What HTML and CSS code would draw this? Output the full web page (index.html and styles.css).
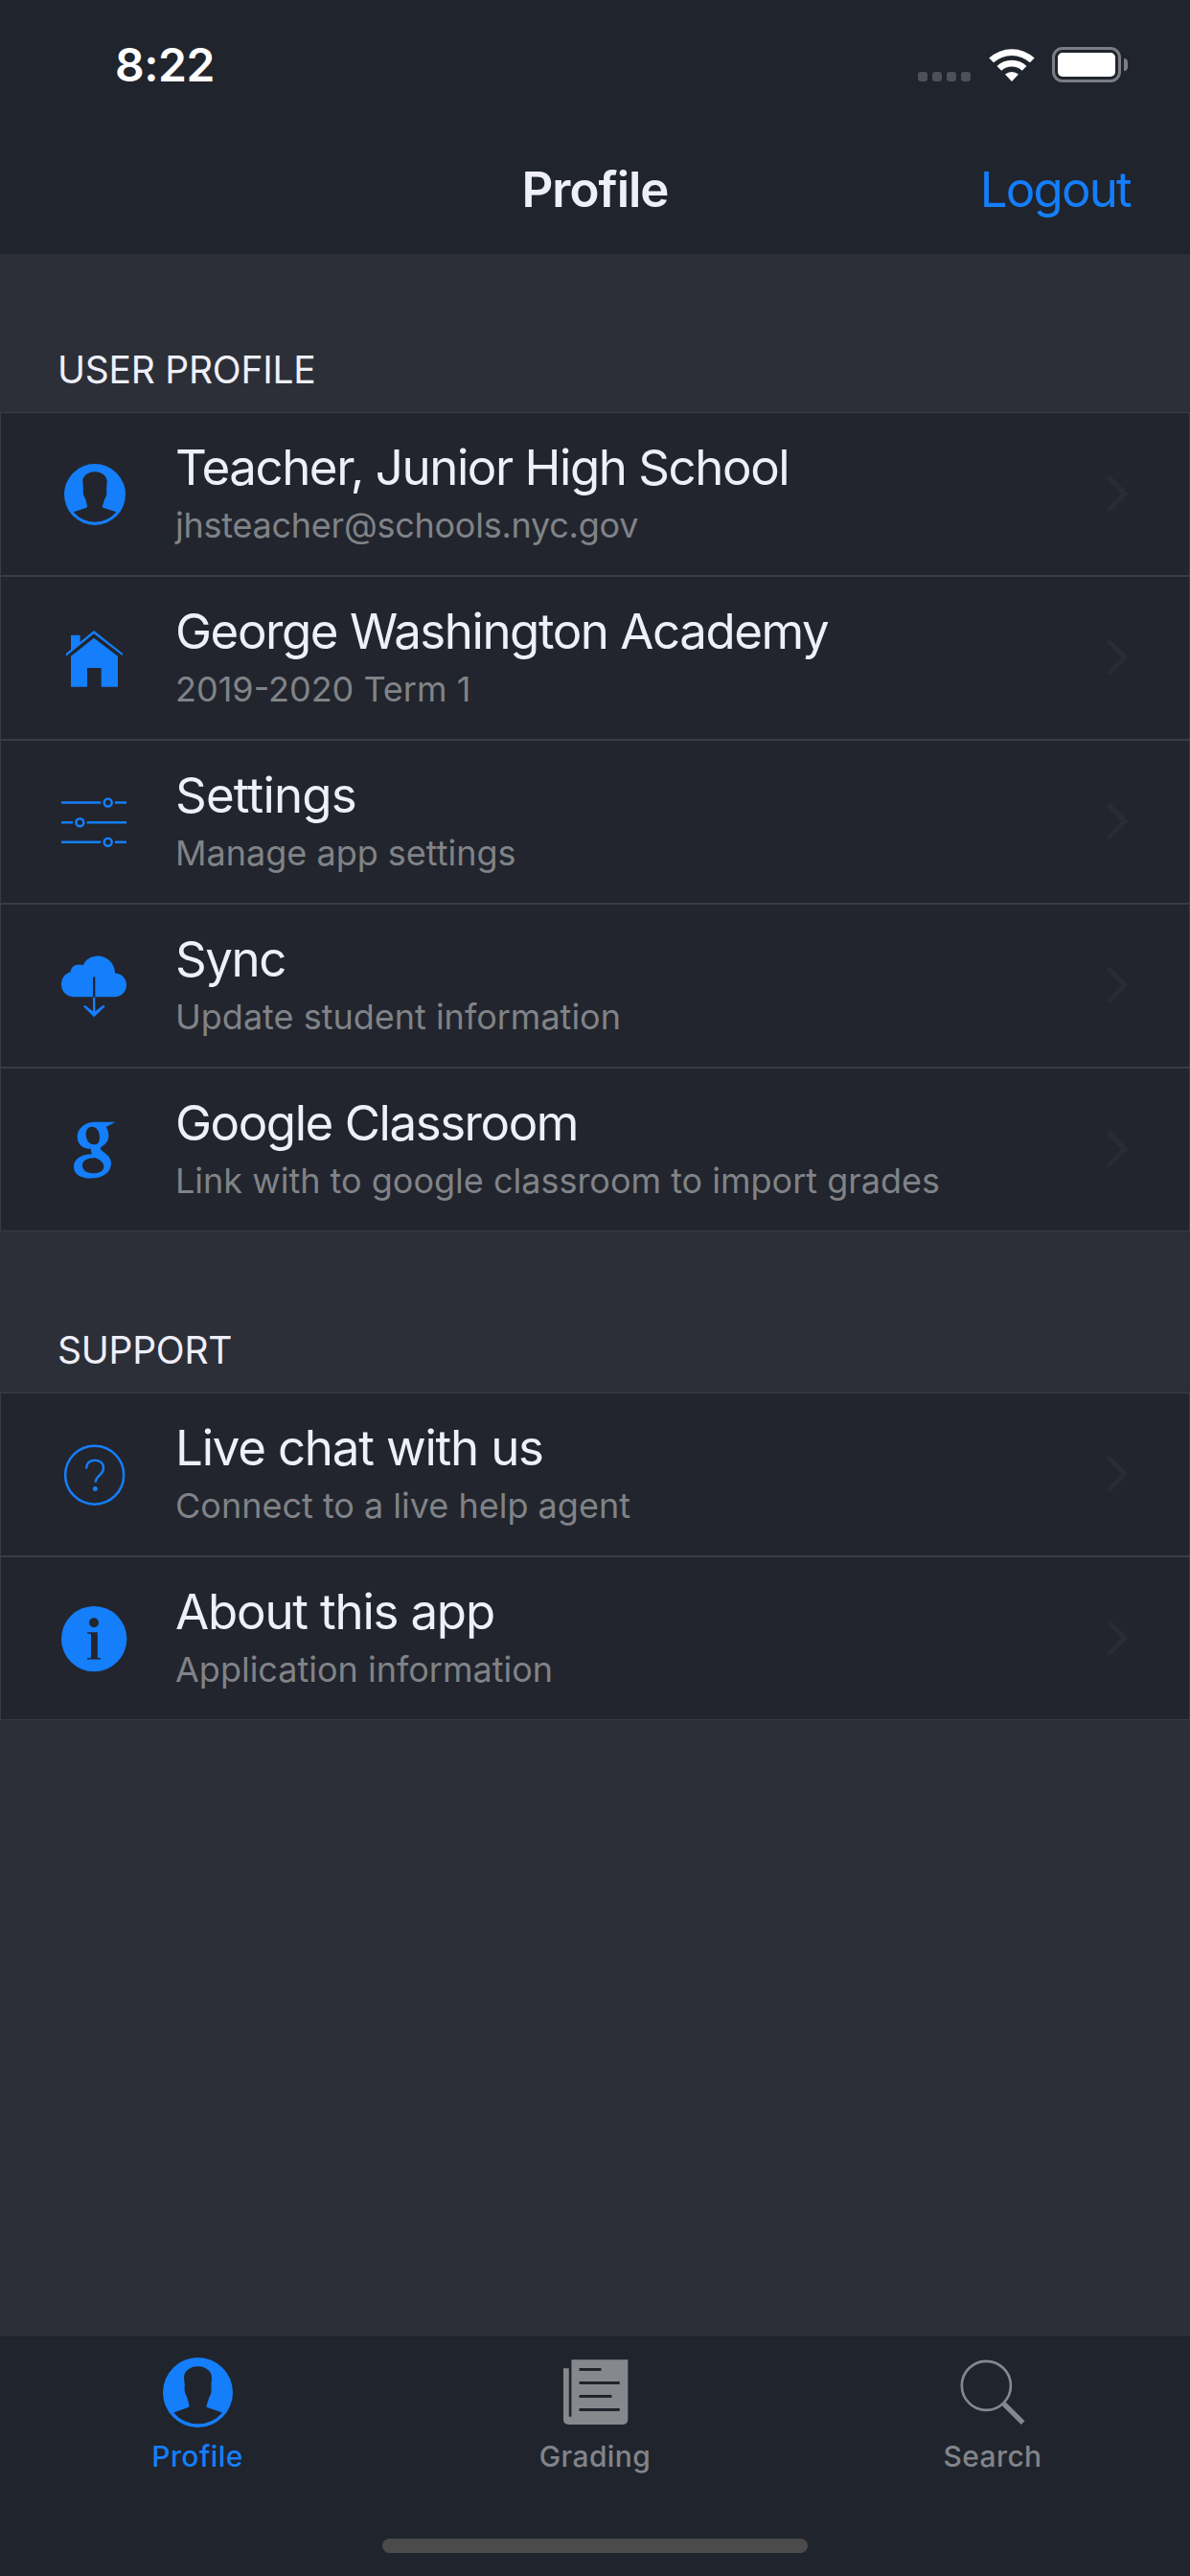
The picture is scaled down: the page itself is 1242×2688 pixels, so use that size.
FILE: index.html
```html
<!DOCTYPE html>
<html lang="en">
  <head>
    <meta charset="utf-8">
    <meta name="viewport" content="width=device-width">
    <title>Profile</title>
    <link rel="stylesheet" href="styles.css">
  </head>
  <body>
    <!-- shared icons -->
    <svg class="icon-defs">
      <symbol id="icon-person" viewBox="0 0 220 220">
        <path fill-rule="evenodd" d="M110 0A110 110 0 0 1 110 220A110 110 0 0 1 110 0ZM33.500 173A100 100 0 0 0 187 173L139 157Q136 156 137 153Q144 129 146 125Q152 114 152.500 108L152 84Q154 70 153.500 61C153 43 134 28 110 28C86 28 67 43 66.500 61Q66.500 70 68.500 84L68 102Q69 113 74.500 122Q77 126 82.500 151Q83 156 80 157Z"/>
      </symbol>
      <symbol id="icon-chevron" viewBox="0 0 24 40">
        <path d="M4 4L20 20L4 36" fill="none" stroke="currentColor" stroke-width="5" stroke-linecap="round"/>
      </symbol>
    </svg>

    <header>
      <div class="status-bar">
        <div class="time">8:22</div>
        <div class="status-icons">
          <div class="signal">
            <span></span><span></span><span></span><span></span>
          </div>
          <svg class="wifi" viewBox="0 0 48 37">
            <path d="M0.300 11.500A35 35 0 0 1 47.700 11.500L43 16.300A28.500 28.500 0 0 0 5 16.300Z"/>
            <path d="M8.500 19.900A22.500 22.500 0 0 1 39.500 19.900L34.700 24.700A16 16 0 0 0 13.300 24.700Z"/>
            <path d="M17 28.500A11 11 0 0 1 31 28.500L24 36Z"/>
          </svg>
          <div class="battery">
            <div class="battery-body"><div class="battery-level"></div></div>
            <div class="battery-cap"></div>
          </div>
        </div>
      </div>
      <nav>
        <h1>Profile</h1>
        <a class="logout">Logout</a>
      </nav>
    </header>

    <main>
      <section>
        <h2>USER PROFILE</h2>
        <div class="item">
          <svg class="item-icon person" viewBox="0 0 220 220"><use href="#icon-person"/></svg>
          <div class="item-text">
            <div class="item-title">Teacher, Junior High School</div>
            <div class="item-detail email">jhsteacher@schools.nyc.gov</div>
          </div>
          <svg class="chevron"><use href="#icon-chevron"/></svg>
        </div>
        <div class="item">
          <svg class="item-icon" viewBox="0 0 216 216">
            <path d="M21 92L36 80V35H65V56L108 21L198 92V100L108 31L21 101Z"/>
            <path d="M36 101L108 44L183 101V197H131V138H87V197H36Z"/>
          </svg>
          <div class="item-text">
            <div class="item-title">George Washington Academy</div>
            <div class="item-detail">2019-2020 Term 1</div>
          </div>
          <svg class="chevron"><use href="#icon-chevron"/></svg>
        </div>
        <div class="item">
          <svg class="item-icon line-icon" viewBox="0 0 216 216">
            <path d="M6 46.500H130M174 46.500H210M6 108.500H42M86 108.500H210M6 170.500H130M174 170.500H210"/>
            <circle cx="152" cy="46.500" r="12"/>
            <circle cx="64" cy="108.500" r="12"/>
            <circle cx="152" cy="170.500" r="12"/>
          </svg>
          <div class="item-text">
            <div class="item-title loose">Settings</div>
            <div class="item-detail">Manage app settings</div>
          </div>
          <svg class="chevron"><use href="#icon-chevron"/></svg>
        </div>
        <div class="item">
          <svg class="item-icon" viewBox="0 0 216 216">
            <path d="M105 141.500H43C22 141.500 6 124 6 103C6 83 18 68 35 63.500C36 46 54 36 74 42.500C82 25 99 13.500 120 13.500C150 13.500 174 37 174 67.500C195 67.500 210 85 210 104C210 125 194 141.500 173 141.500H112V79.500H105Z"/>
            <path d="M105 143H112V187L138 167L143 172L108.500 205L75 172L80 167L105 187Z"/>
          </svg>
          <div class="item-text">
            <div class="item-title">Sync</div>
            <div class="item-detail">Update student information</div>
          </div>
          <svg class="chevron"><use href="#icon-chevron"/></svg>
        </div>
        <div class="item">
          <svg class="item-icon" viewBox="0 0 216 216">
            <path fill-rule="evenodd" d="M176 20.500H112C78 20.500 56 42 56 67C56 91 74 106 99 104C98 112 100 116 103 121C66 121 45 138 45 161C45 183 66 196.500 98 196.500C137 196.500 162 178 162 150C162 134 152 125 138 114C127 106 126 102 134 97C147 88 154 79 154 64C154 51 151 42 146 36ZM103 35C117 35 126 50 126 68C126 83 120 91 109 91C92 91 83 75 83 57C83 43 91 35 103 35ZM113 133C130 140 139 149 139 160C139 174 126 181 107 181C86 181 72 172 72 156C72 141 88 132 113 133Z"/>
          </svg>
          <div class="item-text">
            <div class="item-title">Google Classroom</div>
            <div class="item-detail">Link with to google classroom to import grades</div>
          </div>
          <svg class="chevron"><use href="#icon-chevron"/></svg>
        </div>
      </section>

      <section>
        <h2>SUPPORT</h2>
        <div class="item">
          <svg class="item-icon line-icon" viewBox="0 0 216 216">
            <circle cx="110" cy="108.500" r="91.500"/>
            <path d="M84 88.500C84 72 94 62 111 62C128 62 138 72 138 86C138 97 133 102 126 109C116 119 113 120 113 131"/>
            <circle class="dot" cx="112" cy="151.500" r="7.500"/>
          </svg>
          <div class="item-text">
            <div class="item-title relaxed">Live chat with us</div>
            <div class="item-detail">Connect to a live help agent</div>
          </div>
          <svg class="chevron"><use href="#icon-chevron"/></svg>
        </div>
        <div class="item">
          <svg class="item-icon" viewBox="0 0 216 216">
            <path fill-rule="evenodd" d="M108.500 6A102.500 102.500 0 0 1 108.500 211A102.500 102.500 0 0 1 108.500 6ZM108 42.500A15 15 0 0 0 108 72.500A15 15 0 0 0 108 42.500ZM87 87.500V91L99 94V167L87 169V172.500H129V169L119.500 167V87.500Z"/>
          </svg>
          <div class="item-text">
            <div class="item-title relaxed">About this app</div>
            <div class="item-detail">Application information</div>
          </div>
          <svg class="chevron"><use href="#icon-chevron"/></svg>
        </div>
      </section>
    </main>

    <footer>
      <div class="tabs">
        <div class="tab tab-active">
          <svg viewBox="0 0 220 220"><use href="#icon-person"/></svg>
          <span>Profile</span>
        </div>
        <div class="tab">
          <svg viewBox="0 0 220 220">
            <path fill-rule="evenodd" d="M34.500 7H212V194Q212 211 195 211H26Q9 211 9 194V34H26.500V186H34.500ZM59 33.500V42.500H128V33.500ZM59 75.500V84.500H186V75.500ZM59 117.500V126.500H161V117.500ZM59 159.500V168.500H186V159.500Z"/>
          </svg>
          <span>Grading</span>
        </div>
        <div class="tab">
          <svg class="search-icon" viewBox="0 0 220 220">
            <circle cx="88.500" cy="88.500" r="77"/>
            <path d="M143 145L204 205"/>
          </svg>
          <span>Search</span>
        </div>
      </div>
      <div class="home-indicator"></div>
    </footer>
  </body>
</html>
```
FILE: styles.css
```css
* {
  margin: 0;
  box-sizing: border-box;
}
body {
  width: 1242px;
  height: 2688px;
  display: flex;
  flex-direction: column;
  background-color: #2c2f37;
  color: #efeff9;
  font-family: Inter, "Liberation Sans", sans-serif;
  overflow: hidden;
}
.icon-defs {
  display: none;
}

header {
  height: 265px;
  background-color: #20242c;
}
.status-bar {
  height: 135px;
  padding: 0 65px 0 120px;
  display: flex;
  align-items: center;
  justify-content: space-between;
  color: white;
}
.time {
  font-size: 48px;
  line-height: 60px;
  font-weight: 600;
  letter-spacing: -0.5px;
}
.status-icons {
  display: flex;
  align-items: center;
}
.signal {
  display: flex;
  gap: 5px;
  margin: 25px 19px 0 0;
}
.signal span {
  width: 10px;
  height: 10px;
  border-radius: 3px;
  background-color: #4d5058;
}
.wifi {
  width: 48px;
  height: 37px;
  margin-right: 18px;
  fill: white;
}
.battery {
  display: flex;
  align-items: center;
  gap: 3px;
}
.battery-body {
  width: 72px;
  height: 37px;
  padding: 3px;
  border: 3px solid #7c7d82;
  border-radius: 11px;
}
.battery-level {
  height: 100%;
  border-radius: 5px;
  background-color: white;
}
.battery-cap {
  width: 4px;
  height: 13px;
  border-radius: 0 4px 4px 0;
  background-color: #7c7d82;
}

nav {
  height: 130px;
  padding: 0 62px 5px;
  display: grid;
  grid-template-columns: 1fr auto 1fr;
  align-items: center;
}
h1 {
  grid-column: 2;
  font-size: 51px;
  line-height: 60px;
  font-weight: 600;
  letter-spacing: -1px;
}
.logout {
  justify-self: end;
  font-size: 51px;
  line-height: 60px;
  letter-spacing: -1.8px;
  color: #147efb;
}

main {
  flex-grow: 1;
}
section + section {
  margin-top: 3px;
}
h2 {
  padding: 97px 60px 20px;
  font-size: 39px;
  line-height: 48px;
  font-weight: 400;
  letter-spacing: -0.25px;
}
.item {
  height: 171px;
  padding: 0 63px 0 61px;
  display: flex;
  align-items: center;
  background-color: #22252d;
  border: 1px solid #383c48;
}
.item-icon {
  width: 72px;
  height: 72px;
  margin-right: 49px;
  flex-shrink: 0;
  fill: #147efb;
}
.item-icon.person {
  width: 64px;
  height: 64px;
  margin: 0 52px 0 5px;
}
.item-icon.line-icon {
  fill: none;
  stroke: #147efb;
  stroke-width: 7.5;
}
.item-icon .dot {
  fill: #147efb;
  stroke: none;
}
.item-text {
  flex-grow: 1;
  padding-bottom: 4px;
}
.item-title {
  font-size: 51px;
  line-height: 60px;
  letter-spacing: -1.45px;
  margin-bottom: 8px;
}
.item-title.relaxed {
  letter-spacing: -1.2px;
}
.item-title.loose {
  letter-spacing: -0.8px;
}
.item-detail {
  font-size: 36px;
  line-height: 44px;
  color: #808387;
}
.item-detail.email {
  letter-spacing: -0.25px;
}
.chevron {
  width: 24px;
  height: 40px;
  margin-bottom: 2px;
  color: #292c34;
}

footer {
  height: 250px;
  padding: 22px 0 24px;
  display: flex;
  flex-direction: column;
  align-items: center;
  justify-content: space-between;
  background-color: #20242c;
}
.tabs {
  width: 100%;
  display: grid;
  grid-template-columns: 412px 418px 412px;
}
.tab {
  display: flex;
  flex-direction: column;
  align-items: center;
  gap: 12px;
  font-size: 30px;
  line-height: 36px;
  font-weight: 500;
  letter-spacing: 0.4px;
  color: #828489;
}
.tab svg {
  width: 73px;
  height: 73px;
  fill: #85888d;
}
.tab-active {
  color: #147efb;
}
.tab.tab-active svg {
  fill: #147efb;
}
.tab .search-icon {
  fill: none;
  stroke: #85888d;
  stroke-width: 8;
}
.search-icon path {
  stroke-width: 16;
}
.home-indicator {
  width: 444px;
  height: 15px;
  border-radius: 8px;
  background-color: #4b4b4b;
}
```
